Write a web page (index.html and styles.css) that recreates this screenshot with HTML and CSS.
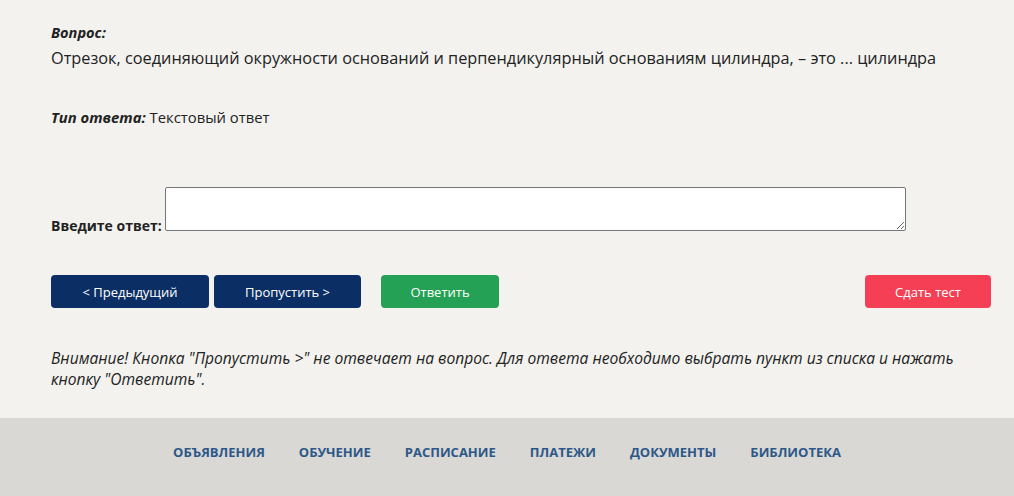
FILE: index.html
```html
<!DOCTYPE html>
<html lang="ru">
<head>
<meta charset="utf-8">
<title>Тест</title>
<link rel="stylesheet" href="styles.css">
</head>
<body>
<main class="content">
  <div class="q-label">Вопрос:</div>
  <div class="q-text">Отрезок, соединяющий окружности оснований и перпендикулярный основаниям цилиндра, – это ... цилиндра</div>
  <div class="type"><span class="type-label">Тип ответа:</span> Текстовый ответ</div>
  <div class="answer"><label class="answer-label">Введите ответ:</label> <textarea class="answer-input"></textarea></div>
  <div class="buttons">
    <button class="btn btn-navy btn-prev">&lt; Предыдущий</button>
    <button class="btn btn-navy btn-skip">Пропустить &gt;</button>
    <button class="btn btn-green btn-answer">Ответить</button>
    <button class="btn btn-red btn-submit">Сдать тест</button>
  </div>
  <p class="warning">Внимание! Кнопка "Пропустить &gt;" не отвечает на вопрос. Для ответа необходимо выбрать пункт из списка и нажать кнопку "Ответить".</p>
</main>
<footer class="footer">
  <nav class="nav">
    <a href="#">Объявления</a>
    <a href="#">Обучение</a>
    <a href="#">Расписание</a>
    <a href="#">Платежи</a>
    <a href="#">Документы</a>
    <a href="#">Библиотека</a>
  </nav>
</footer>
</body>
</html>
```

FILE: styles.css
```css
html, body {
  margin: 0;
  padding: 0;
}
body {
  background: #f3f2ef;
  font-family: "Open Sans", "Noto Sans", sans-serif;
  color: #222;
}
.content {
  box-sizing: border-box;
  height: 418px;
  padding: 22px 23px 0 51px;
}
.q-label {
  font-size: 14.6px;
  line-height: 20px;
  font-weight: 700;
  font-style: italic;
}
.q-text {
  margin-top: 4px;
  font-size: 16.3px;
  line-height: 24px;
}
.type {
  margin-top: 37px;
  font-size: 14.8px;
  line-height: 20px;
}
.type-label {
  font-weight: 700;
  font-style: italic;
}
.answer {
  margin-top: 60px;
  font-size: 14px;
  line-height: 20px;
}
.answer-label {
  font-weight: 700;
}
.answer-input {
  box-sizing: border-box;
  width: 741px;
  height: 44px;
  margin: 0;
  border: 1px solid #767676;
  border-radius: 2px;
  background: #fff;
  vertical-align: baseline;
}
.buttons {
  display: flex;
  margin-top: 39px;
}
.btn {
  height: 33px;
  border: 0;
  border-radius: 4px;
  color: #fff;
  font-family: "Open Sans", "Noto Sans", sans-serif;
  font-size: 13px;
  padding: 0;
}
.btn-navy { background: #0b2f65; }
.btn-green { background: #24a154; }
.btn-red { background: #f43f55; }
.btn-prev { width: 158px; }
.btn-skip { width: 147px; margin-left: 5px; }
.btn-answer { width: 118px; margin-left: 20px; }
.btn-submit { width: 126px; margin-left: auto; }
.warning {
  margin: 40px 0 0;
  font-size: 15.6px;
  line-height: 21px;
  font-style: italic;
}
.footer {
  height: 78px;
  background: #d9d8d4;
}
.nav {
  display: flex;
  justify-content: center;
  gap: 34px;
  padding-top: 25px;
}
.nav a {
  font-size: 13px;
  line-height: 18px;
  font-weight: 700;
  text-transform: uppercase;
  text-decoration: none;
  color: #2d5788;
}
```
